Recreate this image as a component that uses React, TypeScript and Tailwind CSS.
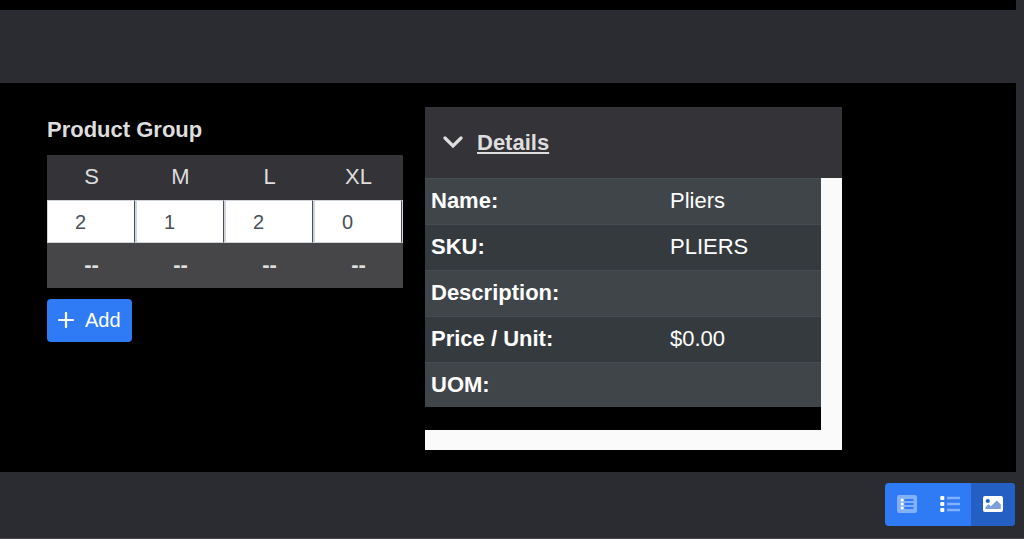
import { useState } from "react";

const sizes = [
  { name: "S", quantity: "2" },
  { name: "M", quantity: "1" },
  { name: "L", quantity: "2" },
  { name: "XL", quantity: "0" },
];

const details = [
  { label: "Name:", value: "Pliers" },
  { label: "SKU:", value: "PLIERS" },
  { label: "Description:", value: "" },
  { label: "Price / Unit:", value: "$0.00" },
  { label: "UOM:", value: "" },
];

const PlusIcon = () => (
  <svg width="16" height="16" viewBox="0 0 16 16" fill="none" aria-hidden="true">
    <path d="M8 1v14M1 8h14" stroke="currentColor" strokeWidth="2.2" strokeLinecap="round" />
  </svg>
);

const ChevronIcon = () => (
  <svg width="20" height="14" viewBox="0 0 20 14" fill="none" aria-hidden="true">
    <path d="M2 2l8 8 8-8" stroke="currentColor" strokeWidth="3.2" strokeLinecap="round" />
  </svg>
);

const CardListIcon = () => (
  <svg width="20" height="18" viewBox="0 0 20 18" fill="none" aria-hidden="true">
    <rect width="20" height="18" rx="2" fill="#83b0fb" />
    <path d="M7.5 5H16.5M7.5 9H16.5M7.5 13H16.5" stroke="#2f7bf6" strokeWidth="2" />
    <circle cx="5.2" cy="5" r="1.6" fill="#fff" />
    <circle cx="5.2" cy="9" r="1.6" fill="#fff" />
    <circle cx="5.2" cy="13" r="1.6" fill="#fff" />
  </svg>
);

const ListIcon = () => (
  <svg width="20" height="18" viewBox="0 0 20 18" fill="none" aria-hidden="true">
    <path d="M7 3H20M7 9H20M7 15H20" stroke="#83b0fb" strokeWidth="2.4" />
    <rect x="0.3" y="1" width="4" height="4" rx="0.8" fill="#fff" />
    <rect x="0.3" y="7" width="4" height="4" rx="0.8" fill="#fff" />
    <rect x="0.3" y="13" width="4" height="4" rx="0.8" fill="#fff" />
  </svg>
);

const ImageIcon = () => (
  <svg width="20" height="16" viewBox="0 0 20 16" fill="none" aria-hidden="true">
    <rect width="20" height="16" rx="2" fill="#fff" />
    <circle cx="4.8" cy="5" r="2.1" fill="#245fc4" />
    <path d="M2.5 13v-2l3-3 2.3 2.2 6-5.7 4 4V13z" fill="#7c9fdc" />
  </svg>
);

const ProductGroup = () => {
  const [quantities, setQuantities] = useState(sizes.map((s) => s.quantity));

  return (
    <section className="w-[356px] shrink-0">
      <h2 className="pt-[7px] pb-[9px] text-[22px] leading-8 font-bold text-[#dedede]">
        Product Group
      </h2>
      <table className="w-full table-fixed border-collapse text-[#dedede]">
        <thead>
          <tr className="h-[45px] bg-[#333338]">
            {sizes.map((size) => (
              <th
                key={size.name}
                id={size.name}
                className="p-0 pb-0.5 text-[22px] leading-6 font-normal"
              >
                {size.name}
              </th>
            ))}
          </tr>
        </thead>
        <tbody>
          <tr>
            {sizes.map((size, i) => (
              <td key={size.name} className="bg-[#ced4da] p-0">
                <input
                  type="text"
                  aria-labelledby={size.name}
                  value={quantities[i]}
                  onChange={(e) =>
                    setQuantities(quantities.map((q, j) => (j === i ? e.target.value : q)))
                  }
                  className="block h-[43px] w-[88px] border border-[#ced4da] border-r-[#495057] bg-white pt-0.5 pl-[27px] text-[20px] leading-6 text-[#495057]"
                />
              </td>
            ))}
          </tr>
          <tr className="h-[45px] bg-[#464649]">
            {sizes.map((size) => (
              <td key={size.name} className="p-0 pb-0.5 text-center text-[22px] leading-6 font-bold">
                --
              </td>
            ))}
          </tr>
        </tbody>
      </table>
      <button
        type="button"
        className="mt-[11px] flex h-[43px] items-center gap-[11px] rounded-sm bg-[#2f7bf6] px-[11px] pb-0.5 text-[20px] text-white"
      >
        <PlusIcon />
        Add
      </button>
    </section>
  );
};

const Details = () => {
  const [open, setOpen] = useState(true);

  return (
    <section className="w-[417px] shrink-0">
      <button
        type="button"
        aria-expanded={open}
        onClick={() => setOpen(!open)}
        className="flex h-[71px] w-full items-center gap-[14px] bg-[#333338] pl-[18px] text-[22px] font-bold text-[#dedede]"
      >
        <ChevronIcon />
        <span className="underline decoration-2 underline-offset-2">Details</span>
      </button>
      {open && (
        <div className="border-r-[21px] border-b-[20px] border-[#fafafa] bg-black pb-[23px]">
          <table className="w-full table-fixed border-separate border-spacing-0 text-left text-[22px] leading-6 text-white">
            <tbody>
              {details.map((row) => (
                <tr
                  key={row.label}
                  className="h-[46px] last:h-[45px] odd:bg-[#404549] even:bg-[#353a3e]"
                >
                  <th
                    scope="row"
                    className="w-[239px] border-t border-[#454d52] px-[6px] pt-0 pb-px font-bold"
                  >
                    {row.label}
                  </th>
                  <td className="border-t border-[#454d52] px-[6px] pt-0 pb-px">{row.value}</td>
                </tr>
              ))}
            </tbody>
          </table>
        </div>
      )}
    </section>
  );
};

const ViewSwitch = () => (
  <div className="flex h-[43px] overflow-hidden rounded-sm bg-[#2f7bf6]">
    <button type="button" aria-label="Cards" className="flex w-11 items-center justify-center pb-0.5">
      <CardListIcon />
    </button>
    <button type="button" aria-label="List" className="flex w-[42px] items-center justify-center pb-0.5">
      <ListIcon />
    </button>
    <button
      type="button"
      aria-label="Images"
      className="flex w-11 items-center justify-center bg-[#245fc4] pb-0.5"
    >
      <ImageIcon />
    </button>
  </div>
);

export default function App() {
  return (
    <div className="min-h-screen bg-[#2b2c31] pr-2 font-['Liberation_Sans',Arial,sans-serif]">
      <div className="h-[10px] bg-black" />
      <div className="h-[73px]" />
      <main className="flex items-start gap-[22px] bg-black pt-6 pb-[22px] pl-[47px]">
        <ProductGroup />
        <Details />
      </main>
      <footer className="-mr-2 flex justify-end border-b border-[#46464b] pt-[11px] pr-[9px] pb-3">
        <ViewSwitch />
      </footer>
    </div>
  );
}
